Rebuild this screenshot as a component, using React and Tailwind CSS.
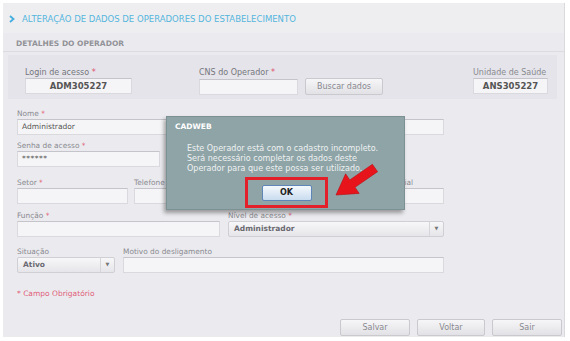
import React from "react";

const font = { fontFamily: '"DejaVu Sans", Verdana, sans-serif' };

const Label = ({ children, req, className = "" }) => (
  <div className={"h-[11px] leading-[11px] text-[7.4px] text-[#8a8a90] whitespace-nowrap " + className}>
    {children}
    {req && <span className="text-[#e0506a]"> *</span>}
  </div>
);

const Input = ({ className = "", children }) => (
  <div
    className={
      "h-[16px] bg-[#f5f5f7] border border-[#d9d9de] border-t-[#c4c4ca] flex items-center px-[4px] text-[7.5px] text-[#555] " +
      className
    }
  >
    {children}
  </div>
);

const Select = ({ value, className = "" }) => (
  <div
    className={
      "h-[16px] bg-gradient-to-b from-[#f7f7f9] to-[#e6e6ea] border border-[#cfcfd4] rounded-[2px] flex items-center " +
      className
    }
  >
    <span className="flex-1 pl-[5px] text-[7.5px] font-bold text-[#6a6a70]">{value}</span>
    <span className="w-[14px] h-full border-l border-[#d6d6da] flex items-center justify-center text-[5px] text-[#777]">
      ▼
    </span>
  </div>
);

const Button = ({ children, className = "" }) => (
  <div
    className={
      "h-[17px] bg-gradient-to-b from-[#f6f6f8] to-[#e2e2e6] border border-[#c9c9ce] rounded-[2px] flex items-center justify-center text-[8px] text-[#8a8a90] " +
      className
    }
  >
    {children}
  </div>
);

export default function App() {
  return (
    <div className="relative w-[570px] h-[341px] bg-white overflow-hidden" style={font}>
      <div className="ml-[3px] mt-[3px] w-[562px] h-[334px] bg-[#ebebef] border-r border-[#dadade] flex flex-col">
        {/* title */}
        <div className="h-[30px] bg-[#eeeef1] flex items-center pl-[6px] pt-[2px]">
          <svg width="6" height="8" viewBox="0 0 6 8" className="mr-[7px]">
            <path d="M1 1 L4.5 4 L1 7" fill="none" stroke="#45aede" strokeWidth="1.8" />
          </svg>
          <span className="text-[8.5px] text-[#55b6dc]">
            ALTERAÇÃO DE DADOS DE OPERADORES DO ESTABELECIMENTO
          </span>
        </div>

        {/* sub header */}
        <div className="h-[19px] border-b border-[#dcdce0] flex items-center pl-[13px] pt-[3px]">
          <span className="text-[7.5px] font-bold text-[#929298]">DETALHES DO OPERADOR</span>
        </div>

        {/* login box */}
        <div className="ml-[5px] mt-[3px] w-[549px] h-[44px] bg-[#e4e4ea] flex pl-[17px] pt-[12px]">
          <div className="w-[107px] flex flex-col">
            <Label req className="text-[8px] text-[#76767c]">Login de acesso</Label>
            <Input className="justify-center font-bold text-[#6b60c9] text-[8.5px]">ADM305227</Input>
          </div>
          <div className="ml-[67px] flex flex-col">
            <Label req className="text-[8px] text-[#76767c]">CNS do Operador</Label>
            <div className="flex items-center">
              <Input className="w-[99px]" />
              <Button className="ml-[7px] w-[78px]">Buscar dados</Button>
            </div>
          </div>
          <div className="ml-[90px] w-[75px] flex flex-col">
            <Label className="text-[8px] text-[#8a8a90]">Unidade de Saúde</Label>
            <Input className="justify-center font-bold text-[#6b60c9] text-[8.5px]">ANS305227</Input>
          </div>
        </div>

        {/* form */}
        <div className="pl-[14px] flex flex-col">
          <div className="mt-[9px] w-[427px] flex flex-col">
            <Label req>Nome</Label>
            <Input>Administrador</Input>
          </div>

          <div className="mt-[5px] w-[143px] flex flex-col">
            <Label req>Senha de acesso</Label>
            <Input className="tracking-[0.5px]">******</Input>
          </div>

          <div className="mt-[10px] flex">
            <div className="w-[111px] flex flex-col">
              <Label req>Setor</Label>
              <Input />
            </div>
            <div className="ml-[6px] w-[200px] flex flex-col">
              <Label>Telefone</Label>
              <Input />
            </div>
            <div className="ml-[9px] w-[101px] flex flex-col">
              <Label>Telefone Comercial</Label>
              <Input />
            </div>
          </div>

          <div className="mt-[6px] flex">
            <div className="w-[203px] flex flex-col">
              <Label req>Função</Label>
              <Input />
            </div>
            <div className="ml-[8px] w-[216px] flex flex-col">
              <Label req>Nível de acesso</Label>
              <Select value="Administrador" />
            </div>
          </div>

          <div className="mt-[9px] flex">
            <div className="w-[98px] flex flex-col">
              <Label>Situação</Label>
              <Select value="Ativo" />
            </div>
            <div className="ml-[8px] w-[321px] flex flex-col">
              <Label>Motivo do desligamento</Label>
              <Input />
            </div>
          </div>

          <div className="mt-[16px] h-[10px] leading-[10px] text-[7.5px] text-[#e0607a]">* Campo Obrigatório</div>
        </div>

        <div className="mt-auto mb-[1px] flex justify-end gap-[7px] pr-[2px]">
          <Button className="w-[70px]">Salvar</Button>
          <Button className="w-[68px]">Voltar</Button>
          <Button className="w-[70px]">Sair</Button>
        </div>
      </div>

      {/* dialog */}
      <div className="absolute left-[166px] top-[116px] w-[239px] h-[94px] bg-[#8fa4a7] border border-[#7d9194] shadow-[-2px_3px_4px_rgba(0,0,0,0.35)] flex flex-col">
        <div className="h-[20px] flex items-center pl-[8px] text-[7.5px] font-bold text-white">CADWEB</div>
        <div className="mt-[7px] pl-[20px] text-[8px] leading-[10px] text-[#eef2f2] whitespace-nowrap">
          <div>Este Operador está com o cadastro incompleto.</div>
          <div>Será necessário completar os dados deste</div>
          <div>Operador para que este possa ser utilizado.</div>
        </div>
        <div className="mt-[3px] ml-[78px] w-[83px] h-[31px] border-[3px] border-[#e3202a] flex items-center justify-center">
          <div className="w-[50px] h-[16px] rounded-[2px] border border-[#5f86b8] bg-gradient-to-b from-[#f4f8fc] to-[#c9dcef] flex items-center justify-center text-[8px] font-bold text-[#222]">
            OK
          </div>
        </div>
      </div>

      {/* red arrow */}
      <svg className="absolute left-[330px] top-[158px]" width="50" height="42" viewBox="0 0 50 42">
        <polygon
          points="6,37 15.6,15.8 19.8,21.9 42.4,6.3 47.6,13.7 25,29.3 29.2,35.4"
          fill="#e8141c"
          stroke="#b80d12"
          strokeWidth="0.6"
        />
      </svg>
    </div>
  );
}
